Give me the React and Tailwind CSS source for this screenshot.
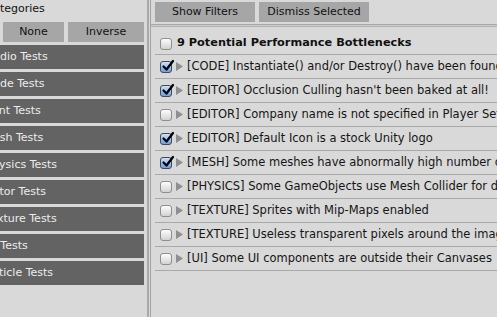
import { useState } from "react";

const categories = [
  { name: "Audio Tests", shift: "ml-[-14.5px]" },
  { name: "Code Tests", shift: "ml-[-14.5px]" },
  { name: "Font Tests", shift: "ml-[-14px]" },
  { name: "Mesh Tests", shift: "ml-[-16.5px]" },
  { name: "Physics Tests", shift: "ml-[-14.5px]" },
  { name: "Editor Tests", shift: "ml-[-17.5px]" },
  { name: "Texture Tests", shift: "ml-[-14.5px]" },
  { name: "UI Tests", shift: "ml-[-14.5px]" },
  { name: "Particle Tests", shift: "ml-[-18.5px]" },
];

const issues = [
  { id: 1, text: "[CODE] Instantiate() and/or Destroy() have been found in Update()", checked: true },
  { id: 2, text: "[EDITOR] Occlusion Culling hasn't been baked at all!", checked: true },
  { id: 3, text: "[EDITOR] Company name is not specified in Player Settings", checked: false },
  { id: 4, text: "[EDITOR] Default Icon is a stock Unity logo", checked: true },
  { id: 5, text: "[MESH] Some meshes have abnormally high number of vertices", checked: true },
  { id: 6, text: "[PHYSICS] Some GameObjects use Mesh Collider for dynamic bodies", checked: false },
  { id: 7, text: "[TEXTURE] Sprites with Mip-Maps enabled", checked: false },
  { id: 8, text: "[TEXTURE] Useless transparent pixels around the images", checked: false },
  { id: 9, text: "[UI] Some UI components are outside their Canvases", checked: false },
];

function Checkbox({ checked, onChange }) {
  return (
    <button
      type="button"
      onClick={onChange}
      className={`relative h-[12px] w-[12px] shrink-0 rounded-[3px] border ${
        checked
          ? "border-[#3d4a5c] bg-gradient-to-b from-[#cfe0f7] to-[#6e9ee0]"
          : "border-[#8e8e8e] bg-gradient-to-b from-[#fdfdfd] to-[#d2d2d2]"
      }`}
    >
      {checked ? (
        <svg
          viewBox="0 0 14 14"
          className="absolute left-[0px] top-[-3px] h-[14px] w-[14px]"
        >
          <path
            d="M2.5 7.5 L5.5 10.5 L12 2"
            fill="none"
            stroke="#000"
            strokeWidth="2.2"
            strokeLinecap="round"
            strokeLinejoin="round"
          />
        </svg>
      ) : null}
    </button>
  );
}

function Arrow() {
  return (
    <svg viewBox="0 0 7 9" className="h-[9px] w-[7px] shrink-0">
      <polygon points="0,0 7,4.5 0,9" fill="#8f8f8f" />
    </svg>
  );
}

export default function App() {
  const [checkedIds, setCheckedIds] = useState(
    issues.filter((issue) => issue.checked).map((issue) => issue.id),
  );
  const [allChecked, setAllChecked] = useState(false);

  const toggle = (id) => {
    setCheckedIds((current) =>
      current.includes(id) ? current.filter((entry) => entry !== id) : [...current, id],
    );
  };

  return (
    <div className="flex h-[317px] w-[497px] overflow-hidden bg-[#d9d9d9] font-['DejaVu_Sans',sans-serif] text-[#111]">
      <aside className="w-[147px] shrink-0 overflow-hidden">
        <div className="ml-[-14.5px] h-[20px] whitespace-nowrap pt-[2px] text-[11px] leading-[14px]">
          Categories
        </div>
        <div className="ml-[-62px] mt-[2px] flex gap-[4px] text-[11px]">
          <button type="button" className="h-[20px] w-[61px] shrink-0 bg-[#a6a6a6]">
            All
          </button>
          <button type="button" className="h-[20px] w-[61px] shrink-0 bg-[#a6a6a6]">
            None
          </button>
          <button type="button" className="h-[20px] w-[76px] shrink-0 bg-[#a6a6a6]">
            Inverse
          </button>
        </div>
        <div className="mt-[3px] flex w-[144px] flex-col gap-[3px]">
          {categories.map((category) => (
            <div
              key={category.name}
              className="flex h-[24px] items-center whitespace-nowrap bg-[#636363] text-[11px] text-[#ececec]"
            >
              <span className={category.shift}>{category.name}</span>
            </div>
          ))}
        </div>
      </aside>

      <div className="w-[2px] shrink-0 bg-[#a9a9a9]" />
      <div className="w-[1px] shrink-0 bg-[#d9d9d9]" />

      <main className="flex min-w-0 flex-1 flex-col border-l border-[#a3a3a3]">
        <div className="flex h-[24px] shrink-0 gap-[4px] pl-[4px] pt-[2px] text-[11px]">
          <button type="button" className="h-[20px] w-[100px] shrink-0 bg-[#a6a6a6]">
            Show Filters
          </button>
          <button type="button" className="h-[20px] w-[110px] shrink-0 bg-[#a6a6a6]">
            Dismiss Selected
          </button>
        </div>
        <div className="h-[1px] shrink-0 bg-[#a8a8a8]" />
        <div className="h-[1px] shrink-0 bg-[#cdcdcd]" />
        <div className="h-[1px] shrink-0 bg-[#b2b2b2]" />

        <div className="pl-[4px]">
          <div className="flex h-[28px] items-center gap-[5px] border-b border-[#a9a9a9] pl-[5px] pt-[6px]">
            <Checkbox checked={allChecked} onChange={() => setAllChecked((v) => !v)} />
            <span className="whitespace-nowrap text-[11.3px] font-bold">
              9 Potential Performance Bottlenecks
            </span>
          </div>
          {issues.map((issue) => (
            <div
              key={issue.id}
              className="flex h-[24px] items-center border-b border-[#a9a9a9] pl-[5px]"
            >
              <Checkbox
                checked={checkedIds.includes(issue.id)}
                onChange={() => toggle(issue.id)}
              />
              <span className="ml-[4px]">
                <Arrow />
              </span>
              <span className="ml-[4px] whitespace-nowrap text-[11.5px] text-[#151515]">
                {issue.text}
              </span>
            </div>
          ))}
        </div>
      </main>
    </div>
  );
}
